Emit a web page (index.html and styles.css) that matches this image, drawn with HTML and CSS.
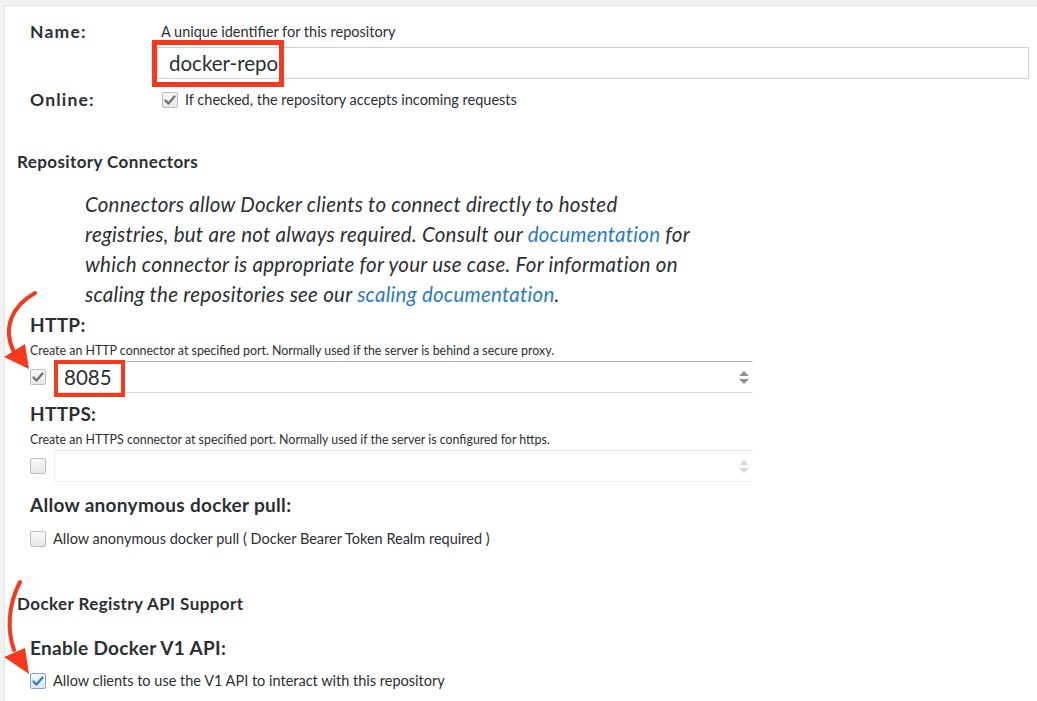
FILE: index.html
```html
<!DOCTYPE html>
<html lang="en">
<head>
<meta charset="utf-8">
<title>Repository</title>
<link rel="stylesheet" href="styles.css">
</head>
<body>
<div class="page">
  <div class="form-row">
    <div class="label">Name:</div>
    <div class="field">
      <div class="help">A unique identifier for this repository</div>
      <div class="text-input">docker-repo</div>
    </div>
  </div>
  <div class="form-row online">
    <div class="label">Online:</div>
    <div class="field check-line">
      <span class="cb checked-gray"><svg viewBox="0 0 16 16"><path d="M3.5 8.5 L6.5 11.5 L12.5 4.5"/></svg></span>
      <span>If checked, the repository accepts incoming requests</span>
    </div>
  </div>

  <h3 class="section">Repository Connectors</h3>
  <p class="intro">Connectors allow Docker clients to connect directly to hosted<br>registries, but are not always required. Consult our <a href="#">documentation</a> for<br>which connector is appropriate for your use case. For information on<br>scaling the repositories see our <a href="#">scaling documentation</a>.</p>

  <div class="group">
    <h4 class="glabel http">HTTP:</h4>
    <div class="small">Create an HTTP connector at specified port. Normally used if the server is behind a secure proxy.</div>
    <div class="port-row">
      <span class="cb checked-gray"><svg viewBox="0 0 16 16"><path d="M3.5 8.5 L6.5 11.5 L12.5 4.5"/></svg></span>
      <div class="port-input active"><span class="port-val">8085</span><span class="spin"><i class="up"></i><i class="down"></i></span></div>
    </div>

    <h4 class="glabel https">HTTPS:</h4>
    <div class="small">Create an HTTPS connector at specified port. Normally used if the server is configured for https.</div>
    <div class="port-row">
      <span class="cb"></span>
      <div class="port-input disabled"><span class="port-val"></span><span class="spin"><i class="up"></i><i class="down"></i></span></div>
    </div>

    <h4 class="glabel anon">Allow anonymous docker pull:</h4>
    <div class="check-line opt">
      <span class="cb"></span>
      <span>Allow anonymous docker pull ( Docker Bearer Token Realm required )</span>
    </div>
  </div>

  <h3 class="section api">Docker Registry API Support</h3>
  <div class="group">
    <h4 class="glabel v1">Enable Docker V1 API:</h4>
    <div class="check-line opt v1-opt">
      <span class="cb checked-blue"><svg viewBox="0 0 16 16"><path d="M3.5 8.5 L6.5 11.5 L12.5 4.5"/></svg></span>
      <span>Allow clients to use the V1 API to interact with this repository</span>
    </div>
  </div>

  <svg class="annot" width="1037" height="701" viewBox="0 0 1037 701">
    <rect x="154.5" y="42.5" width="127" height="42" fill="none" stroke="#f5391c" stroke-width="5"/>
    <rect x="56" y="362" width="67" height="33" fill="none" stroke="#f5391c" stroke-width="4"/>
    <path d="M35 293 C 12 306, 2 328, 14 352" fill="none" stroke="#f5391c" stroke-width="4" stroke-linecap="round"/>
    <polygon points="4,357 25,344 29,369" fill="#f5391c"/>
    <path d="M20 582 C 8 605, 7 630, 14 650" fill="none" stroke="#f5391c" stroke-width="4" stroke-linecap="round"/>
    <polygon points="4,657 25,648 29,674" fill="#f5391c"/>
  </svg>
</div>
</body>
</html>
```

FILE: styles.css
```css
html, body {
  margin: 0;
  padding: 0;
  background: #f2f2f2;
}
body {
  font-family: "Lato", "Open Sans", Arial, sans-serif;
  color: #2b2f33;
  height: 701px;
  overflow: hidden;
}
.page {
  position: relative;
  margin: 5px 0 0 4px;
  background: #fff;
  border-top: 1px solid #e2e2e2;
  border-left: 1px solid #e2e2e2;
  padding: 16px 8px 0 12px;
  height: 700px;
  box-sizing: border-box;
}
.form-row {
  display: grid;
  grid-template-columns: 127px 1fr;
  padding-left: 13px;
}
.label {
  font-weight: 700;
  font-size: 17.5px;
  letter-spacing: 1.2px;
  line-height: 20px;
  color: #2b2f33;
}
.help {
  font-size: 14.5px;
  line-height: 18px;
  padding-left: 4px;
  margin-top: 1px;
}
.text-input {
  margin-top: 6px;
  height: 32px;
  box-sizing: border-box;
  border: 1px solid #cfcfcf;
  font-size: 20.5px;
  line-height: 30px;
  padding-left: 11px;
  color: #2b2f33;
}
.online {
  margin-top: 11px;
}
.check-line {
  display: flex;
  align-items: center;
  gap: 7px;
  font-size: 14.5px;
  line-height: 20px;
}
.online .check-line {
  padding-left: 5px;
}
.cb {
  width: 16px;
  height: 16px;
  box-sizing: border-box;
  border: 1px solid #bdbdbd;
  border-radius: 2px;
  background: linear-gradient(#fafafa, #e6e6e6);
  display: inline-flex;
  flex: none;
}
.cb svg {
  width: 16px;
  height: 16px;
  margin: -1px;
}
.cb path {
  fill: none;
  stroke-width: 2.2;
  stroke-linecap: round;
  stroke-linejoin: round;
}
.checked-gray path { stroke: #6f6f6f; }
.checked-blue {
  border-color: #7aa8d8;
  background: linear-gradient(#f4f8fc, #dde8f4);
}
.checked-blue path { stroke: #2f78c4; }
.section {
  margin: 42px 0 0 0;
  font-size: 17px;
  letter-spacing: 0.4px;
  line-height: 20px;
  font-weight: 700;
  color: #2b2f33;
}
.intro {
  margin: 17px 0 0 68px;
  width: 660px;
  white-space: nowrap;
  font-size: 20.5px;
  letter-spacing: 0.25px;
  line-height: 30px;
  font-style: italic;
  color: #2b2f33;
}
.intro a {
  color: #2a7bc6;
  text-decoration: none;
}
.group {
  padding-left: 13px;
}
.glabel {
  margin: 0;
  font-size: 19px;
  letter-spacing: 0.3px;
  line-height: 22px;
  font-weight: 700;
  color: #2b2f33;
}
.http { margin-top: 5px; }
.https { margin-top: 10px; }
.anon { margin-top: 12px; }
.v1 { margin-top: 23px; }
.small {
  font-size: 12.4px;
  line-height: 14px;
  margin-top: 8px;
}
.port-row {
  display: flex;
  align-items: center;
  gap: 8px;
  margin-top: 3px;
  width: 723px;
}
.port-input {
  flex: 1;
  height: 32px;
  box-sizing: border-box;
  border: 1px solid #e4e4e4;
  display: flex;
  align-items: center;
  justify-content: space-between;
  padding: 0 3px 0 9px;
}
.port-input.active {
  border-top-color: #b5b5b5;
  border-left-color: #ececec;
  border-right-color: #fff;
  border-bottom-color: #dcdcdc;
}
.port-input.disabled {
  border-color: #f0f0f0;
  border-top-color: #e6e6e6;
  border-right-color: #fff;
}
.port-val {
  font-size: 20.5px;
  line-height: 30px;
  color: #2b2f33;
}
.spin {
  display: flex;
  flex-direction: column;
  gap: 3px;
}
.spin i {
  display: block;
  width: 0;
  height: 0;
  border-left: 5px solid transparent;
  border-right: 5px solid transparent;
}
.spin .up { border-bottom: 5px solid #8f8f8f; }
.spin .down { border-top: 5px solid #8f8f8f; }
.disabled .spin .up { border-bottom-color: #d8d8d8; }
.disabled .spin .down { border-top-color: #d8d8d8; }
.opt {
  margin-top: 13px;
}
.v1-opt {
  margin-top: 12px;
}
.api {
  margin-top: 45px;
  margin-left: 0;
}
.annot {
  position: absolute;
  left: -5px;
  top: -6px;
  pointer-events: none;
}
```
